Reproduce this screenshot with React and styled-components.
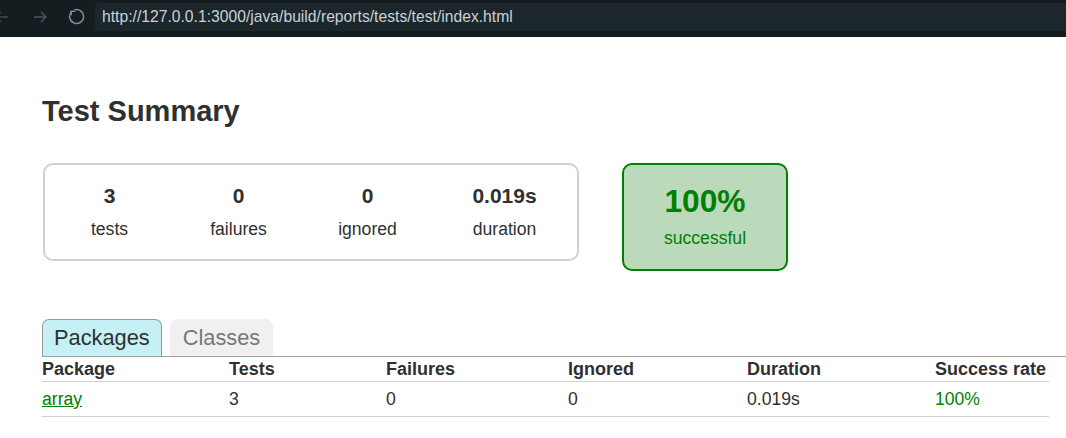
import React from 'react';
import styled, { createGlobalStyle } from 'styled-components';

const GlobalStyle = createGlobalStyle`
    body {
        margin: 0;
        background: #ffffff;
        font-family: "Liberation Sans", Arial, sans-serif;
        font-size: 17.6px;
        color: #303030;
    }
`

const BrowserBar = styled.header`
    height: 37px;
    background: #151d21;
    display: flex;
    align-items: center;
`
const NavIcons = styled.div`
    width: 95px;
    display: flex;
    align-items: center;
    height: 100%;
    margin-top: -3px;
`
const NavIcon = styled.span`
    display: flex;
    margin-left: ${props => props.$left}px;
    color: ${props => props.$color};
`
const UrlField = styled.div`
    flex: 1;
    height: 28px;
    margin-top: -3px;
    background: #1c272c;
    border-radius: 4px 0 0 4px;
    display: flex;
    align-items: center;
    padding-left: 7px;
    font-size: 15.7px;
    color: #c9d1d5;
`

const Content = styled.main`
    padding: 0 17px 0 42px;
`
const Title = styled.h1`
    margin: 57px 0 0;
    font-size: 29px;
    line-height: 34px;
    font-weight: bold;
    color: #303030;
`
const SummaryRow = styled.div`
    display: flex;
    align-items: flex-start;
    gap: 43px;
    margin-top: 35px;
    margin-left: 1px;
`
const SummaryGroup = styled.div`
    display: flex;
    border: 2px solid #d0d0d0;
    border-radius: 10px;
    height: 94px;
`
const InfoBox = styled.div`
    width: ${props => props.$width}px;
    text-align: center;
    padding-top: 19px;
`
const Counter = styled.div`
    font-size: 21px;
    line-height: 24px;
    font-weight: bold;
    color: #303030;
`
const Label = styled.div`
    margin-top: 11px;
    line-height: 20px;
    color: #303030;
`
const SuccessRate = styled.div`
    box-sizing: border-box;
    width: 166px;
    height: 108px;
    border: 2px solid #008000;
    border-radius: 10px;
    background: #bbd9bb;
    color: #008000;
    text-align: center;
    padding-top: 18px;
`
const Percent = styled.div`
    font-size: 31.7px;
    line-height: 36px;
    font-weight: bold;
`
const SuccessLabel = styled.div`
    margin-top: 9px;
    line-height: 20px;
`

const TabStrip = styled.ul`
    display: flex;
    gap: 8px;
    margin: 48px -17px 0 0;
    padding: 0;
    list-style: none;
    border-bottom: 1px solid #a0a0a0;
`
const Tab = styled.li`
    font-size: 21.8px;
    line-height: 26px;
    padding: 5px ${props => props.$selected ? '11px' : '12px'};
    border: 1px solid ${props => props.$selected ? '#999999' : '#f0f0f0'};
    border-bottom: none;
    border-radius: 7px 7px 0 0;
    background: ${props => props.$selected ? '#c5f0f5' : '#f0f0f0'};
    color: ${props => props.$selected ? '#303030' : '#777777'};
`

const Table = styled.div`
    display: grid;
    grid-template-columns: 187px 157px 182px 179px 188px 1fr;
`
const HeadCell = styled.div`
    font-size: 18px;
    line-height: 21px;
    font-weight: bold;
    padding: 2px 0 1px;
    border-bottom: 1px solid #d0d0d0;
    color: #303030;
`
const Cell = styled.div`
    line-height: 20px;
    padding: 7px 0;
    border-bottom: 1px solid #d0d0d0;
    color: ${props => props.$success ? '#008000' : '#303030'};
`
const PackageLink = styled.a`
    color: #008000;
    text-decoration: underline;
`

const BackIcon = () => (
    <svg width="14" height="14" viewBox="0 0 14 14" fill="none" stroke="currentColor" strokeWidth="1.3">
        <path d="M13 7H1M6 2L1 7l5 5" />
    </svg>
)
const ForwardIcon = () => (
    <svg width="14" height="14" viewBox="0 0 14 14" fill="none" stroke="currentColor" strokeWidth="1.3">
        <path d="M1 7h12M8 2l5 5-5 5" />
    </svg>
)
const ReloadIcon = () => (
    <svg width="18" height="18" viewBox="0 0 18 18" fill="none" stroke="currentColor" strokeWidth="1.5">
        <path d="M6.7 1.75A7 7 0 1 1 3.6 3.6" />
        <path d="M3.2 7.2V3.2h4" />
    </svg>
)

const columns = ['Package', 'Tests', 'Failures', 'Ignored', 'Duration', 'Success rate'];

function App() {
    return (
        <>
            <GlobalStyle />
            <BrowserBar>
                <NavIcons>
                    <NavIcon $left={-5} $color="#3b494f"><BackIcon /></NavIcon>
                    <NavIcon $left={24} $color="#4a595f"><ForwardIcon /></NavIcon>
                    <NavIcon $left={21} $color="#7f8f95"><ReloadIcon /></NavIcon>
                </NavIcons>
                <UrlField>http://127.0.0.1:3000/java/build/reports/tests/test/index.html</UrlField>
            </BrowserBar>
            <Content>
                <Title>Test Summary</Title>
                <SummaryRow>
                    <SummaryGroup>
                        <InfoBox $width={129}><Counter>3</Counter><Label>tests</Label></InfoBox>
                        <InfoBox $width={129}><Counter>0</Counter><Label>failures</Label></InfoBox>
                        <InfoBox $width={129}><Counter>0</Counter><Label>ignored</Label></InfoBox>
                        <InfoBox $width={145}><Counter>0.019s</Counter><Label>duration</Label></InfoBox>
                    </SummaryGroup>
                    <SuccessRate>
                        <Percent>100%</Percent>
                        <SuccessLabel>successful</SuccessLabel>
                    </SuccessRate>
                </SummaryRow>
                <TabStrip>
                    <Tab $selected>Packages</Tab>
                    <Tab>Classes</Tab>
                </TabStrip>
                <Table>
                    {columns.map(c => <HeadCell key={c}>{c}</HeadCell>)}
                    <Cell><PackageLink href="#">array</PackageLink></Cell>
                    <Cell>3</Cell>
                    <Cell>0</Cell>
                    <Cell>0</Cell>
                    <Cell>0.019s</Cell>
                    <Cell $success>100%</Cell>
                </Table>
            </Content>
        </>
    );
}

export default App;
